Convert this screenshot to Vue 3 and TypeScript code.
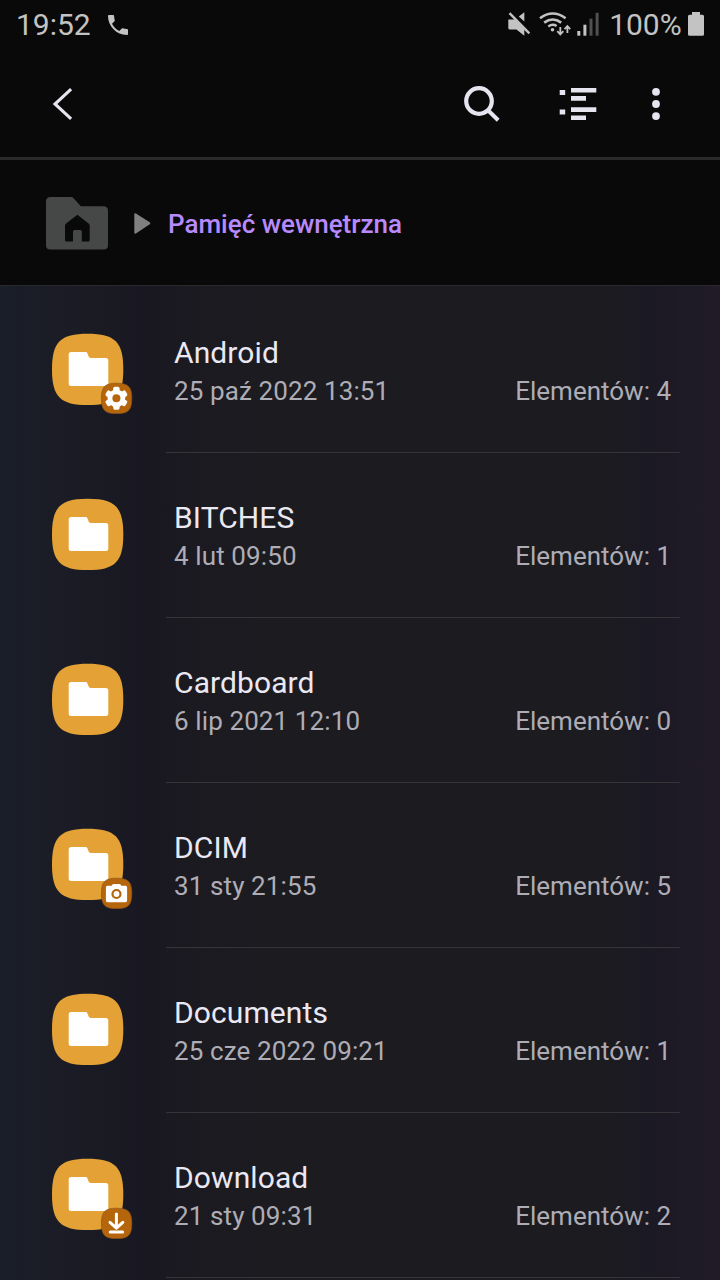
<script setup lang="ts">
type Badge = 'gear' | 'camera' | 'download'

interface Folder {
  name: string
  modified: string
  count: number
  badge?: Badge
}

const folders: Folder[] = [
  { name: 'Android', modified: '25 paź 2022 13:51', count: 4, badge: 'gear' },
  { name: 'BITCHES', modified: '4 lut 09:50', count: 1 },
  { name: 'Cardboard', modified: '6 lip 2021 12:10', count: 0 },
  { name: 'DCIM', modified: '31 sty 21:55', count: 5, badge: 'camera' },
  { name: 'Documents', modified: '25 cze 2022 09:21', count: 1 },
  { name: 'Download', modified: '21 sty 09:31', count: 2, badge: 'download' },
]

const gearTeeth = [0, 60, 120, 180, 240, 300]
</script>

<template>
  <div class="screen">
    <header class="status">
      <span class="clock">19:52</span>
      <svg class="phone" width="20" height="20" viewBox="3 3 18 18">
        <path d="M6.62 10.79c1.44 2.83 3.76 5.14 6.59 6.59l2.2-2.2c.27-.27.67-.36 1.02-.24 1.12.37 2.33.57 3.57.57.55 0 1 .45 1 1V20c0 .55-.45 1-1 1-9.39 0-17-7.61-17-17 0-.55.45-1 1-1h3.5c.55 0 1 .45 1 1 0 1.25.2 2.45.57 3.57.11.35.03.74-.25 1.02l-2.2 2.2z" />
      </svg>
      <span class="spacer"></span>
      <svg class="indicators" width="94" height="28" viewBox="506 10 94 28">
        <path d="M508.3 19.5H515.2L524.3 29V35.7L516.5 29.5H510Q508.3 29.5 508.3 28Z" />
        <path d="M524.3 12.3V21.5L518.8 16.6Z" />
        <path class="line" d="M509.5 13.2L529.3 33.3" stroke-width="2.4" />
        <path class="line" d="M540 18.2Q552.7 8.8 565.6 18.2" stroke-width="2.6" />
        <path class="line" d="M544.2 22.6Q552.7 16.4 561.2 22.6" stroke-width="2.6" />
        <path class="line" d="M548.3 26.4Q552.7 23.4 556.6 26" stroke-width="2.4" />
        <circle cx="552.5" cy="29.8" r="1.8" />
        <path class="line" d="M560.3 27V34M557.3 31.2L560.3 34.4L563.3 31.2" stroke-width="1.8" />
        <path class="line" d="M567.4 33V26.3M564.6 29.1L567.4 26L570.2 29.1" stroke-width="1.8" />
        <rect x="577.3" y="31" width="3" height="4.7" />
        <rect x="583.4" y="24.7" width="3" height="11" />
        <rect class="dim" x="589.5" y="18.7" width="3" height="17" />
        <rect class="dim" x="595.6" y="12.8" width="3" height="22.9" />
      </svg>
      <span class="percent">100%</span>
      <svg class="battery" width="16" height="24" viewBox="0 0 16 24">
        <path d="M4 0H12V2.7H14.5Q16 2.7 16 4.2V22.3Q16 23.8 14.5 23.8H1.5Q0 23.8 0 22.3V4.2Q0 2.7 1.5 2.7H4Z" />
      </svg>
    </header>

    <nav class="toolbar">
      <svg width="24" height="36" viewBox="50 86 24 36">
        <path class="stroke" d="M71.1 89.2L55 104L71.1 118.8" stroke-width="3.1" />
      </svg>
      <span class="spacer"></span>
      <svg class="search" width="38" height="38" viewBox="462 84 38 38">
        <circle class="stroke" cx="479" cy="101" r="12.8" stroke-width="4.2" />
        <path class="stroke" d="M488 110.2L498.2 120.2" stroke-width="4" />
      </svg>
      <svg class="view" width="38" height="34" viewBox="559 87 38 34">
        <path class="solid" d="M559.7 90H565.2V95H559.7ZM559.7 109.6H565.2V114.6H559.7ZM571 88H596.3V92.6H571ZM571 96.1H586V100.7H571ZM571 107.3H596.3V111.9H571ZM571 115.4H586V120H571Z" />
      </svg>
      <svg class="more" width="10" height="34" viewBox="651 87 10 34">
        <circle class="solid" cx="656" cy="91.8" r="3.9" />
        <circle class="solid" cx="656" cy="104" r="3.9" />
        <circle class="solid" cx="656" cy="116.1" r="3.9" />
      </svg>
    </nav>

    <div class="path">
      <svg width="62" height="53" viewBox="0 0 62 53">
        <path fill="#464847" d="M4.5 0H24.5Q26.5 0 27.8 1.4L34.8 9.2H57.5Q62 9.2 62 13.7V48.3Q62 52.6 57.5 52.6H4.5Q0 52.6 0 48.3V4.5Q0 0 4.5 0Z" />
        <path fill="#090909" d="M31.4 17.8L42.6 26.4Q43.7 27.3 43.7 28.7V43Q43.7 44.5 42.2 44.5H35.8V34.6Q35.8 33 34.2 33H28.6Q27 33 27 34.6V44.5H20.5Q19 44.5 19 43V28.7Q19 27.3 20.1 26.4Z" />
      </svg>
      <svg class="arrow" width="17" height="21" viewBox="0 0 17 21">
        <path fill="#808080" d="M1.9.4L15.7 9.3Q17 10.3 15.7 11.3L1.9 20.5Q.3 21.3.3 19.6V1.3Q.3-.4 1.9.4Z" />
      </svg>
      <span class="crumb">Pamięć wewnętrzna</span>
    </div>

    <main class="list">
      <article v-for="folder in folders" :key="folder.name" class="row">
        <svg class="icon" width="84" height="84" viewBox="0 0 84 84">
          <path fill="#e4a236" d="M37.7 1.8C65 1.8 73.3 10 73.3 37.4S65 73 37.7 73S2 64.8 2 37.4S10.4 1.8 37.7 1.8Z" />
          <path fill="#fff" d="M21.2 20H35.5Q37 20 37.5 21.4L38.6 24.6Q39.1 26 40.6 26H55.8Q58.3 26 58.3 28.5V51.5Q58.3 54 55.8 54H21.2Q18.7 54 18.7 51.5V22.5Q18.7 20 21.2 20Z" />
          <g v-if="folder.badge">
            <path fill="#b5650b" stroke="#8d5520" stroke-width=".7" d="M66.6 51.2C78.2 51.2 81.8 54.8 81.8 66.4S78.2 81.6 66.6 81.6S51.4 78 51.4 66.4S55 51.2 66.6 51.2Z" />
            <g v-if="folder.badge === 'gear'">
              <rect
                v-for="angle in gearTeeth"
                :key="angle"
                fill="#fff"
                x="63.2"
                y="54.8"
                width="6.4"
                height="9"
                rx="1.7"
                :transform="`rotate(${angle} 66.4 66.3)`"
              />
              <circle cx="66.4" cy="66.3" r="6.4" fill="none" stroke="#fff" stroke-width="5" />
              <circle cx="66.4" cy="66.3" r="4" fill="#b5650b" />
            </g>
            <g v-else-if="folder.badge === 'camera'">
              <path fill="#fff" d="M57.5 58.8H61.7L62.3 57.7Q62.7 56.9 63.6 56.9H69.4Q70.3 56.9 70.7 57.7L71.3 58.8H75.5Q77.1 58.8 77.1 60.4V73.6Q77.1 75.2 75.5 75.2H57.5Q55.9 75.2 55.9 73.6V60.4Q55.9 58.8 57.5 58.8Z" />
              <circle cx="66.5" cy="67" r="4" fill="none" stroke="#b5650b" stroke-width="2.2" />
            </g>
            <path
              v-else
              fill="none"
              stroke="#fff"
              stroke-width="3"
              stroke-linecap="round"
              stroke-linejoin="round"
              d="M66.4 56.9V70.5M60 65.3L66.4 71.2L72.8 65.3M60.2 74.9H72.6"
            />
          </g>
        </svg>
        <div class="body">
          <div class="name">{{ folder.name }}</div>
          <div class="meta">
            <span class="date">{{ folder.modified }}</span>
            <span>Elementów: {{ folder.count }}</span>
          </div>
        </div>
      </article>
    </main>
  </div>
</template>

<style>
body {
  margin: 0;
  background: #090909;
  overflow: hidden;
}
</style>

<style scoped>
.screen {
  width: 720px;
  height: 1280px;
  display: flex;
  flex-direction: column;
  overflow: hidden;
  background: #090909;
  font-family: Roboto, "Liberation Sans", sans-serif;
}

svg {
  display: block;
  flex: none;
}

.spacer {
  flex: 1;
}

.status {
  box-sizing: border-box;
  height: 50px;
  flex: none;
  display: flex;
  align-items: center;
  padding: 0 16px 2px;
  color: #c3c3c3;
  fill: #c3c3c3;
  font-size: 30px;
  line-height: 46px;
}

.clock,
.percent {
  padding-top: 2px;
}

.phone {
  margin: 1px 0 0 17px;
}

.line {
  fill: none;
  stroke: #c3c3c3;
}

.dim {
  fill: #505050;
}

.percent {
  margin: 0 6.3px 0 9.2px;
}

.toolbar {
  box-sizing: border-box;
  height: 110px;
  flex: none;
  display: flex;
  align-items: center;
  padding: 0 59px 0 50px;
  border-bottom: 3px solid #2a2a2a;
}

.search {
  margin: -2px 59px 0 0;
}

.view {
  margin-right: 54px;
}

.stroke {
  fill: none;
  stroke: #e6e4ee;
}

.solid {
  fill: #e6e4ee;
}

.path {
  box-sizing: border-box;
  height: 126px;
  flex: none;
  display: flex;
  align-items: center;
  padding: 2px 46px 0;
  border-bottom: 1px solid #29282b;
}

.arrow {
  margin: 0 17px 0 26px;
}

.crumb {
  color: #b88aff;
  font-size: 26px;
  font-weight: 500;
}

.list {
  flex: 1;
  padding-top: 2px;
  background: linear-gradient(90deg, #1a1e29 0, #1b1c25 60px, #191822 150px, #1b1a20 190px, #1c1b20 260px, #1c1b20 610px, #1b1924 650px, #211b28 720px);
}

.row {
  height: 165px;
  display: flex;
  padding: 0 40px 0 50px;
}

.icon {
  margin-top: 44px;
}

.body {
  box-sizing: border-box;
  flex: 1;
  margin-left: 32px;
  padding: 45px 9px 0 8px;
  border-bottom: 1px solid #353438;
}

.name {
  color: #eae8f2;
  font-size: 30px;
  line-height: 40px;
  letter-spacing: 0.1px;
}

.meta {
  display: flex;
  justify-content: space-between;
  color: #aeadb6;
  font-size: 26px;
  line-height: 36px;
}

.date {
  letter-spacing: 0.11px;
}
</style>
